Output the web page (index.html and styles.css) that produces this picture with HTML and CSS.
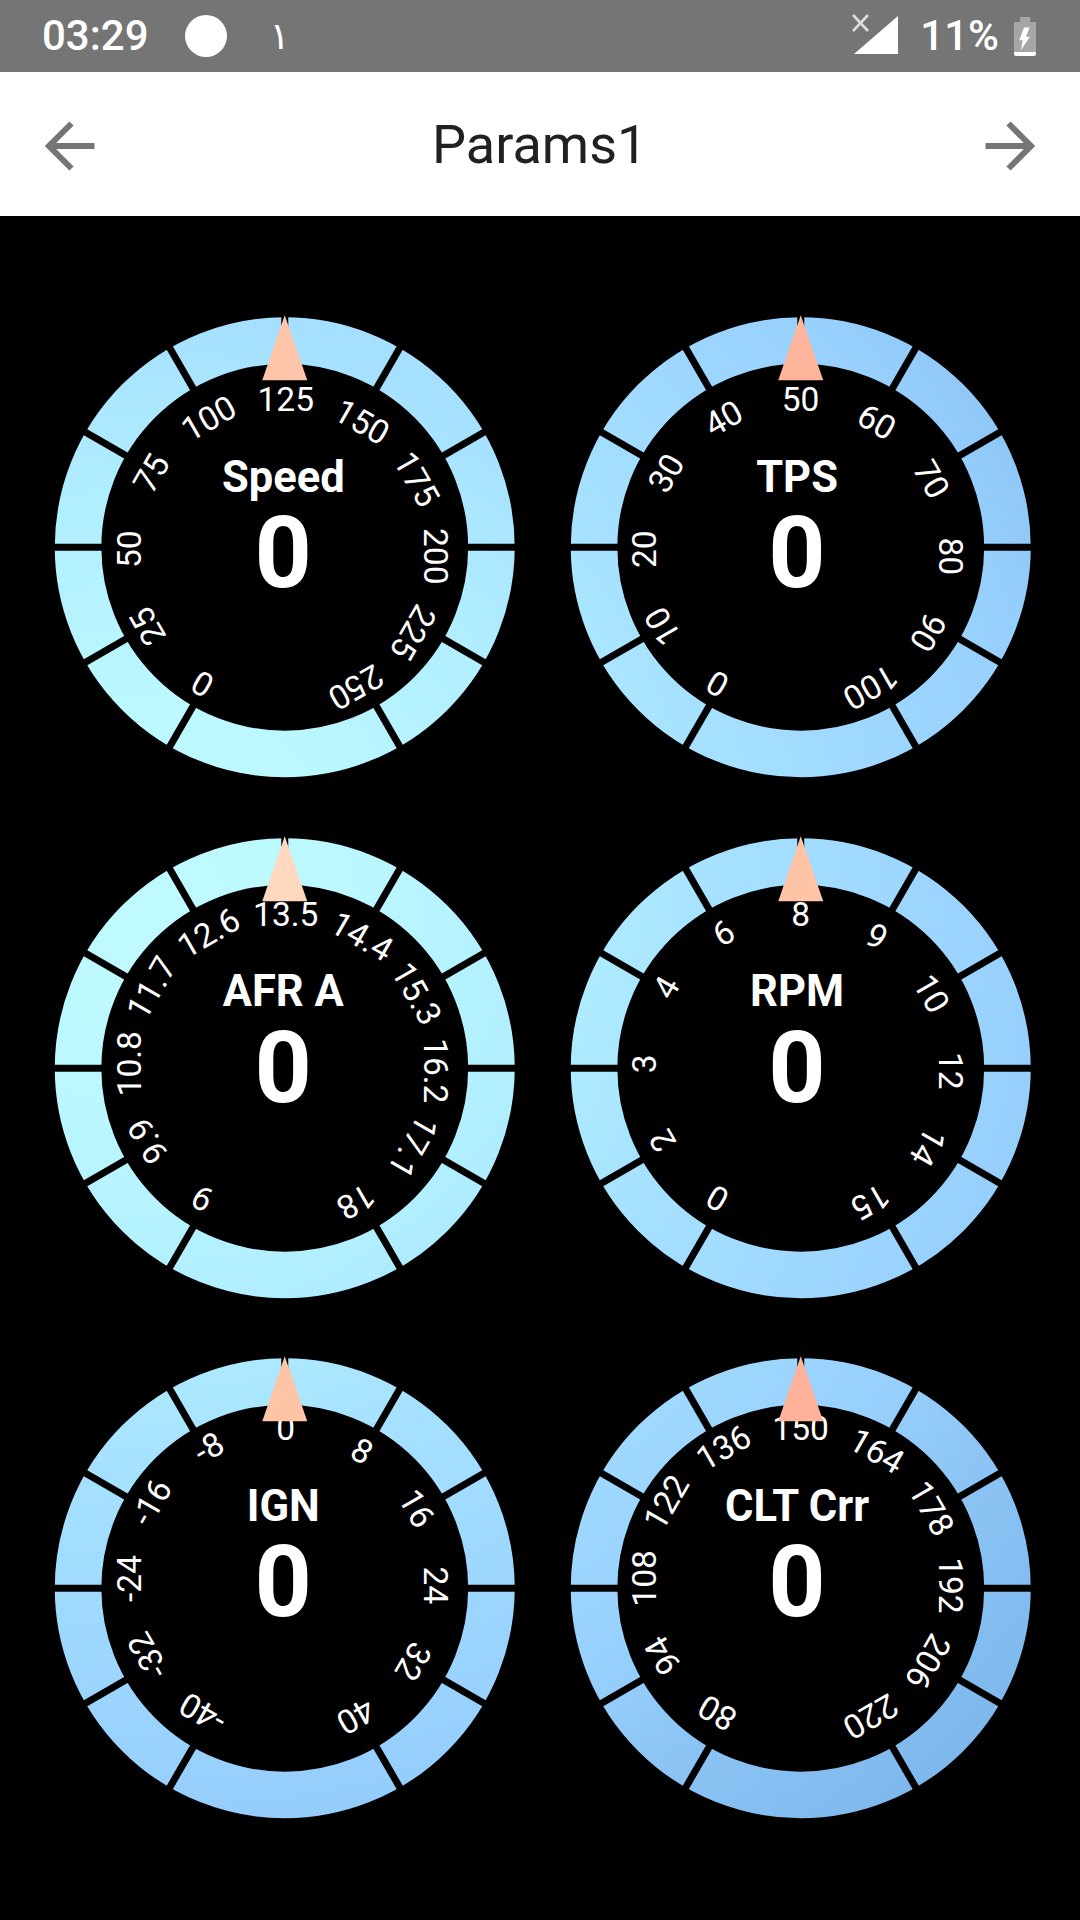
FILE: index.html
```html
<!DOCTYPE html>
<html lang="en">
  <head>
    <title>Params1</title>
    <link rel="stylesheet" href="styles.css">
  </head>
<body>
    <div class="status-bar">
        <div class="status-left">
            <span class="clock">03:29</span>
            <span class="dot"></span>
            <span class="arabic-one">١</span>
        </div>
        <div class="status-right">
            <svg class="signal" width="46" height="42" viewBox="0 0 46 42">
                <path d="M2 40 L46 2 L46 40 Z" fill="#fff"/>
                <path d="M1 1 L16 17 M16 1 L1 17" stroke="#ddd" stroke-width="2.6" fill="none"/>
            </svg>
            <span class="battery-text">11%</span>
            <svg class="battery" width="22" height="39" viewBox="0 0 22 39">
                <path d="M6 0 H16 V5 H22 V35 H0 V5 H6 Z" fill="#a6a6a6"/>
                <path d="M0 35 H22 V37 Q22 39 20 39 H2 Q0 39 0 37 Z" fill="#fff"/>
                <path d="M10 10.5 H15.500 L12 19.800 H16 L7 33 L8.700 23.300 H5.300 Z" fill="#fff"/>
            </svg>
        </div>
    </div>

    <div class="app-bar">
        <svg class="nav-arrow" width="54" height="54" viewBox="0 0 54 54">
            <path d="M52.500 27 H6 M29.500 4.500 L7 27 L29.500 49.500" stroke="#757575" stroke-width="6" fill="none"/>
        </svg>
        <div class="page-title">Params1</div>
        <svg class="nav-arrow" width="54" height="54" viewBox="0 0 54 54">
            <path d="M1.500 27 H48 M24.500 4.500 L47 27 L24.500 49.500" stroke="#757575" stroke-width="6" fill="none"/>
        </svg>
    </div>

    <div class="gauges" id="gauges"></div>

    <script src="app.js"></script>
</body>
</html>
```

FILE: styles.css
```css
* {
  box-sizing: border-box;
}
html, body {
  margin: 0;
  background-color: #000;
}
body {
  width: 1080px;
  height: 1920px;
  overflow: hidden;
  font-family: Roboto, "Noto Sans", sans-serif;
}
.status-bar {
  height: 72px;
  padding: 0 44px 0 42px;
  background-color: #757575;
  color: #fff;
  display: flex;
  align-items: center;
  justify-content: space-between;
}
.status-left, .status-right {
  display: flex;
  align-items: center;
}
.clock {
  font-size: 42px;
  font-weight: 500;
  line-height: 72px;
}
.dot {
  width: 42px;
  height: 42px;
  margin-left: 36px;
  border-radius: 50%;
  background-color: #fff;
}
.arabic-one {
  margin-left: 43px;
  font-family: "DejaVu Sans", sans-serif;
  font-size: 38px;
  line-height: 72px;
}
.signal {
  margin-top: -2px;
}
.battery-text {
  margin-left: 22.500px;
  font-size: 42px;
  font-weight: 500;
  line-height: 72px;
}
.battery {
  margin-left: 15px;
}
.app-bar {
  height: 144px;
  padding: 0 42.500px 0 42px;
  background-color: #fff;
  display: flex;
  align-items: center;
  justify-content: space-between;
}
.nav-arrow {
  margin-top: 4px;
}
.page-title {
  font-size: 54px;
  color: #212121;
}
.gauges {
  padding: 71px 0 0 27px;
  display: grid;
  grid-template-columns: 515.5px 515.5px;
  grid-auto-rows: 520.5px;
}
.gauge {
  display: block;
  width: 515.5px;
  height: 520.5px;
}
.tick-label {
  font-size: 33.500px;
  fill: #fff;
  text-anchor: middle;
}
.gauge-name {
  font-size: 43.500px;
  font-weight: 700;
  fill: #fff;
  text-anchor: middle;
}
.gauge-value {
  font-size: 100px;
  font-weight: 700;
  fill: #fff;
  text-anchor: middle;
}
```

FILE: app.js
```js
var gauges = [
  { name: "Speed", pointer: "#ffc5a8", labels: ["0", "25", "50", "75", "100", "125", "150", "175", "200", "225", "250"] },
  { name: "TPS", pointer: "#ffb59b", labels: ["0", "10", "20", "30", "40", "50", "60", "70", "80", "90", "100"] },
  { name: "AFR A", pointer: "#ffd9bf", labels: ["9", "9.9", "10.8", "11.7", "12.6", "13.5", "14.4", "15.3", "16.2", "17.1", "18"] },
  { name: "RPM", pointer: "#ffc3a6", labels: ["0", "2", "3", "4", "6", "8", "9", "10", "12", "14", "15"] },
  { name: "IGN", pointer: "#ffc3a6", labels: ["-40", "-32", "-24", "-16", "-8", "0", "8", "16", "24", "32", "40"] },
  { name: "CLT Crr", pointer: "#ffb299", labels: ["80", "94", "108", "122", "136", "150", "164", "178", "192", "206", "220"] }
];

// inner text sits a little off the ring centre, different per row and column
var rowShift = [5.5, -1, -6.3];
var colShift = [-2.5, -3.7];
var nameShift = [1, 0];

// the ring colour is one gradient over the whole screen
var glowX = 150, glowY = 900;
var stops = [
  [0, "#bffaff"], [190, "#bbf8ff"], [390, "#b2efff"], [580, "#a5e1ff"], [660, "#a2dcff"],
  [900, "#96cffc"], [1000, "#8cc4f5"], [1180, "#7eb8ec"]
];

function buildGauge(g, i) {
  var col = i % 2, row = Math.floor(i / 2);
  var centerX = 285 + col * 515.5, centerY = 547 + row * 520.5;

  var stopTags = stops.map(function(s) {
    return '<stop offset="' + s[0] / 1180 + '" stop-color="' + s[1] + '"/>';
  }).join('');

  // no gap at the very bottom of the ring
  var gaps = '';
  for (var a = 0; a < 360; a += 30) {
    if (a == 180) continue;
    gaps += '<line x1="0" y1="-176" x2="0" y2="-236" stroke="#000" stroke-width="7" transform="rotate(' + a + ')"/>';
  }

  var labels = g.labels.map(function(text, n) {
    var angle = (n - 5) * 30;
    return '<text class="tick-label" x="3.5" y="-141.5" transform="rotate(' + angle + ')">' + text + '</text>';
  }).join('');

  return '<svg class="gauge" viewBox="-257.75 -260.25 515.5 520.5">' +
    '<defs><radialGradient id="ring' + i + '" gradientUnits="userSpaceOnUse" cx="' + (glowX - centerX) +
    '" cy="' + (glowY - centerY) + '" r="1180">' + stopTags + '</radialGradient></defs>' +
    '<circle r="206.7" fill="none" stroke="url(#ring' + i + ')" stroke-width="46.6"/>' +
    gaps +
    '<g transform="translate(' + colShift[col] + ' ' + rowShift[row] + ')">' +
    labels +
    '<text class="gauge-name" x="' + nameShift[col] + '" y="-61">' + g.name + '</text>' +
    '<text class="gauge-value" x="' + nameShift[col] + '" y="34.500">0</text>' +
    '</g>' +
    '<polygon points="0,-232 22.500,-167 -22.500,-167" fill="' + g.pointer + '"/>' +
    '</svg>';
}

document.getElementById('gauges').innerHTML = gauges.map(buildGauge).join('');
```
